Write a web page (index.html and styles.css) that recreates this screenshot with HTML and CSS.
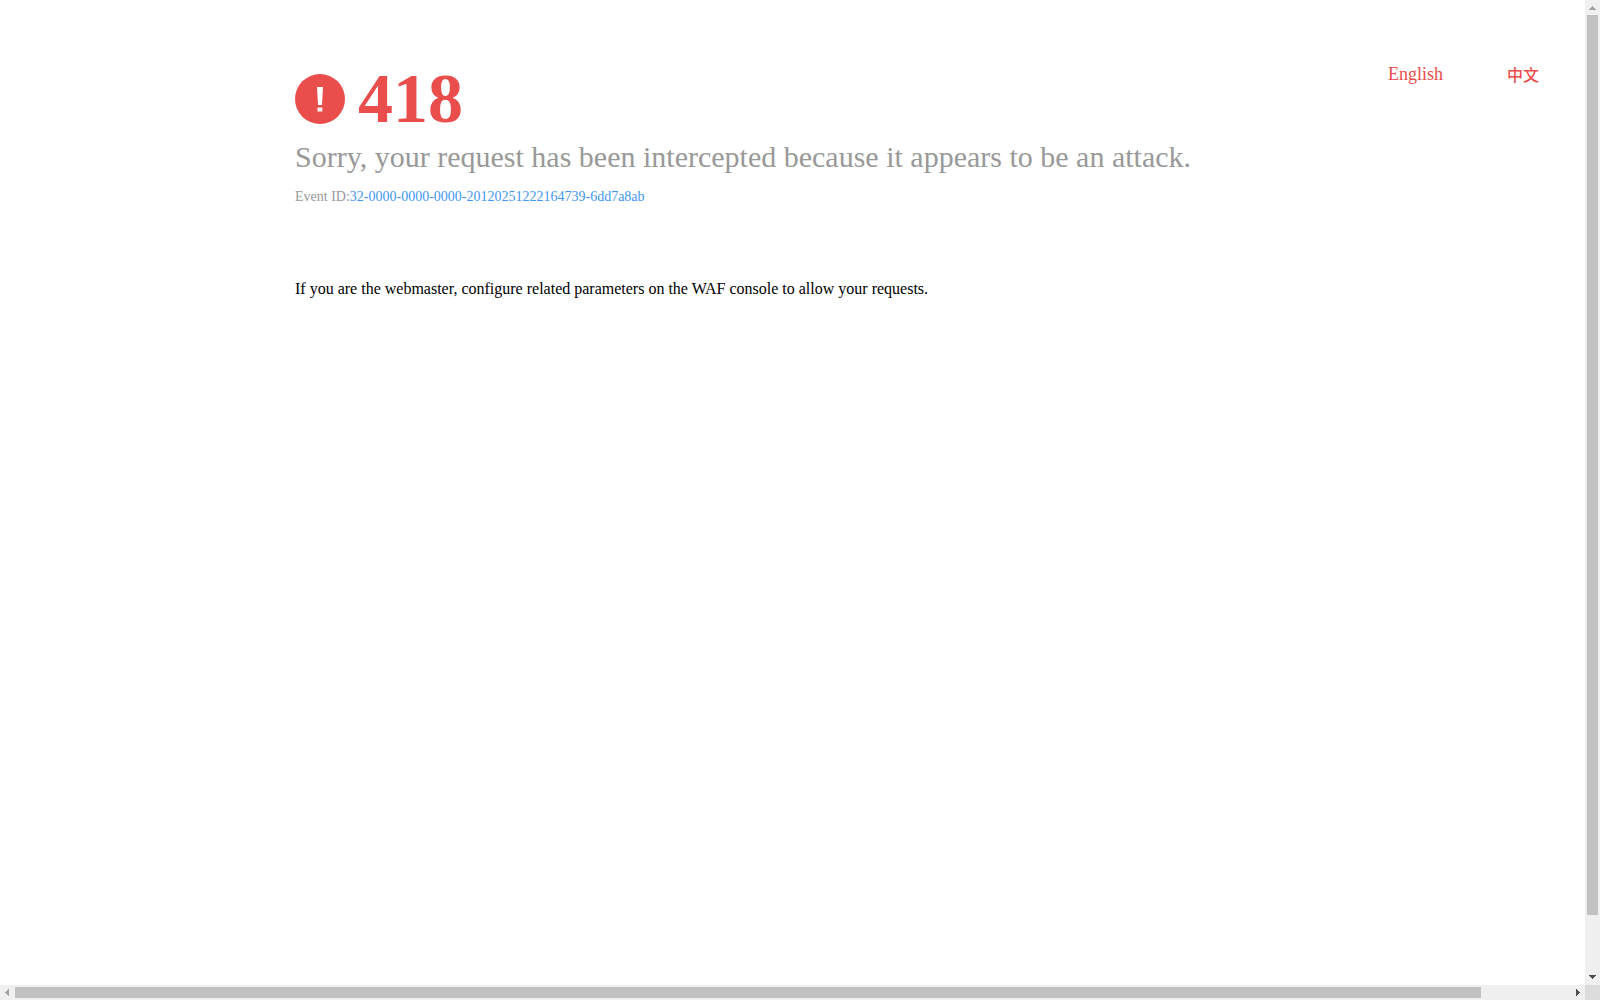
FILE: index.html
```html
<!DOCTYPE html>
<html lang="en">
<head>
<meta charset="utf-8">
<title>418</title>
<link rel="stylesheet" href="styles.css">
</head>
<body>
<div class="viewport">
  <div class="page">
    <main class="content">
      <h1 class="status">
        <svg class="status-icon" viewBox="0 0 50 50" aria-hidden="true"><circle cx="25" cy="25" r="25" fill="#e94d4c"/><path d="M22 13h6l-1 18h-4zM22.500 33.500h4.800v4h-4.800z" fill="#fff"/></svg>
        <span>418</span>
      </h1>
      <p class="message">Sorry, your request has been intercepted because it appears to be an attack.</p>
      <p class="event">Event ID:<span class="event-id">32-0000-0000-0000-20120251222164739-6dd7a8ab</span></p>
      <p class="hint">If you are the webmaster, configure related parameters on the WAF console to allow your requests.</p>
    </main>
    <nav class="languages">
      <a class="language" href="#en">English</a>
      <a class="language language-zh" href="#zh" lang="zh">中文</a>
    </nav>
  </div>
  <div class="bar bar-vertical" aria-hidden="true">
    <svg class="arrow arrow-off" viewBox="0 0 15 15"><path d="M7 6h1v1h1v1h1v1h1v1H4V9h1V8h1V7h1z"/></svg>
    <div class="track"><div class="thumb"></div></div>
    <svg class="arrow" viewBox="0 0 15 15"><path d="M4 5h7v1h-1v1H9v1H8v1H7V8H6V7H5V6H4z"/></svg>
  </div>
  <div class="bar bar-horizontal" aria-hidden="true">
    <svg class="arrow arrow-off" viewBox="0 0 15 15"><path d="M5 7h1V6h1V5h1V4h1v7H8v-1H7V9H6V8H5z"/></svg>
    <div class="track"><div class="thumb"></div></div>
    <svg class="arrow" viewBox="0 0 15 15"><path d="M6 4h1v1h1v1h1v1h1v1H9v1H8v1H7v1H6z"/></svg>
  </div>
  <div class="corner"></div>
</div>
</body>
</html>
```
FILE: styles.css
```css
body {
  margin: 0;
  font-family: "Liberation Serif", serif;
  font-size: 16px;
  color: #000;
}
.viewport {
  display: grid;
  grid-template-columns: minmax(0, 1fr) 15px;
  grid-template-rows: minmax(0, 1fr) 15px;
  height: 100vh;
}
.page {
  display: flex;
  justify-content: space-between;
  padding: 58px 46px 0 295px;
}
.languages {
  display: flex;
  align-items: flex-start;
  gap: 64px;
  padding-top: 6px;
}
.language {
  color: #e94d4c;
  text-decoration: none;
  font-size: 18px;
  line-height: 20px;
}
.language-zh {
  font-family: "Noto Sans CJK SC", sans-serif;
  font-size: 16px;
  font-weight: 500;
}
.status {
  display: flex;
  align-items: center;
  gap: 13px;
  margin: 0;
  font-size: 70px;
  line-height: 82px;
  color: #e94d4c;
}
.status-icon { width: 50px; height: 50px; }
.message {
  margin: 0;
  font-size: 30px;
  line-height: 34px;
  color: #999;
}
.event {
  margin: 14px 0 0;
  font-size: 14px;
  line-height: 18px;
  color: #999;
}
.event-id { color: #3f97f0; }
.hint { margin: 74px 0 0; line-height: 18px; }

.bar { display: flex; background: #f0f0f0; }
.bar-vertical { flex-direction: column; }
.arrow { flex: none; width: 15px; height: 15px; fill: #505050; }
.arrow-off { fill: #a3a3a3; }
.track { flex: 1; }
.thumb { background: #c1c1c1; }
.bar-vertical .track { padding: 0 2px; }
.bar-vertical .thumb { height: 94.2%; }
.bar-horizontal .track { padding: 2px 0; }
.bar-horizontal .thumb { width: 94.3%; height: 11px; }
.corner { background: #dcdcdc; }
```
